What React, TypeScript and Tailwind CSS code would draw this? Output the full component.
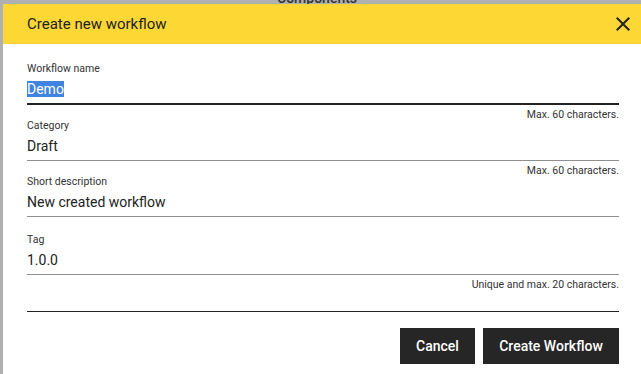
interface FieldProps {
  label: string
  value: string
  helper?: string
  active?: boolean
}

function Field({ label, value, helper, active }: FieldProps) {
  return (
    <div>
      <div className="text-[10.5px] leading-[12px] text-[#333]">{label}</div>
      <div
        className={
          active
            ? 'pt-[4px] pb-[4px] text-[14px] leading-[20px] text-[#222] border-b-2 border-[#222]'
            : 'pt-[4px] pb-[4px] text-[14px] leading-[20px] text-[#222] border-b border-[#8f8f8f]'
        }
      >
        {active ? <span className="bg-[#3f84e0] text-white">{value}</span> : value}
      </div>
      <div className="mt-[5px] h-[10px] text-right text-[10.5px] leading-[10px] text-[#333]">
        {helper}
      </div>
    </div>
  )
}

export default function App() {
  return (
    <div
      className="relative w-[641px] h-[374px] overflow-hidden bg-[#b0b0b0]"
      style={{ fontFamily: 'Roboto, "Liberation Sans", sans-serif' }}
    >
      {/* page heading behind the dialog, only its bottom edge shows */}
      <div className="absolute left-[277px] top-[-12px] text-[14px] leading-[20px] font-medium text-[#333]">
        Components
      </div>

      <div className="absolute left-[3px] top-[4px] w-[640px] h-[400px] bg-white">
        <div className="flex items-center justify-between h-10 pl-6 pr-2 bg-[#fdd835]">
          <span className="text-[15px] text-[#222]">Create new workflow</span>
          <svg width="24" height="24" viewBox="0 0 24 24" fill="#222">
            <path d="M19 6.41L17.59 5 12 10.59 6.41 5 5 6.41 10.59 12 5 17.59 6.41 19 12 13.41 17.59 19 19 17.59 13.41 12z" />
          </svg>
        </div>

        <div className="px-6 pt-[19px]">
          <Field label="Workflow name" value="Demo" helper="Max. 60 characters." active />
          <Field label="Category" value="Draft" helper="Max. 60 characters." />
          <div className="pb-[2px]">
            <Field label="Short description" value="New created workflow" />
          </div>
          <Field label="Tag" value="1.0.0" helper="Unique and max. 20 characters." />

          <div className="mt-[21px] border-t border-[#222]" />

          <div className="flex justify-end gap-2 pt-4">
            <button className="w-[75px] h-9 bg-[#262626] text-white text-[14px] font-medium">
              Cancel
            </button>
            <button className="w-[136px] h-9 bg-[#262626] text-white text-[14px] font-medium">
              Create Workflow
            </button>
          </div>
        </div>
      </div>
    </div>
  )
}
